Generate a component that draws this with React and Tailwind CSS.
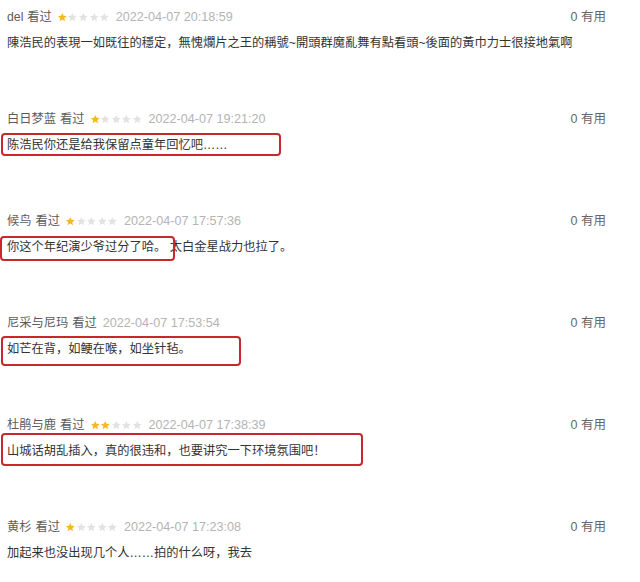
import React from "react";

// Comment list data
const comments = [
  {
    name: "del",
    stars: 1,
    time: "2022-04-07 20:18:59",
    text: "陳浩民的表現一如既往的穩定，無愧爛片之王的稱號~開頭群魔亂舞有點看頭~後面的黃巾力士很接地氣啊",
  },
  {
    name: "白日梦蓝",
    stars: 1,
    time: "2022-04-07 19:21:20",
    text: "陈浩民你还是给我保留点童年回忆吧……",
    box: "-top-[2px] -left-[6px] w-[280px] h-[23px]",
  },
  {
    name: "候鸟",
    stars: 1,
    time: "2022-04-07 17:57:36",
    text: "你这个年纪演少爷过分了哈。 太白金星战力也拉了。",
    box: "-top-[1px] -left-[7px] w-[175px] h-[25px]",
  },
  {
    name: "尼采与尼玛",
    stars: 0,
    time: "2022-04-07 17:53:54",
    text: "如芒在背，如鲠在喉，如坐针毡。",
    box: "-top-[3px] -left-[6px] w-[240px] h-[30px]",
  },
  {
    name: "杜鹃与鹿",
    stars: 2,
    time: "2022-04-07 17:38:39",
    text: "山城话胡乱插入，真的很违和，也要讲究一下环境氛围吧！",
    box: "-top-[8px] -left-[6px] w-[362px] h-[33px]",
  },
  {
    name: "黄杉",
    stars: 1,
    time: "2022-04-07 17:23:08",
    text: "加起来也没出现几个人……拍的什么呀，我去",
  },
];

const Star = ({ on }) => (
  <svg viewBox="0 0 24 24" className="w-[10.6px] h-[10.6px]">
    <path
      d="M12 2l2.9 6.6 7.1.6-5.4 4.7 1.6 7-6.2-3.7-6.2 3.7 1.6-7L2 9.2l7.1-.6z"
      fill={on ? "#f6b822" : "#e2e2e2"}
    />
  </svg>
);

const Stars = ({ count }) => (
  <div className="flex items-center ml-[5px]">
    {[0, 1, 2, 3, 4].map((i) => (
      <Star key={i} on={i < count} />
    ))}
  </div>
);

const App = () => {
  return (
    <div className="w-[640px] h-[582px] bg-white overflow-hidden font-['Liberation_Sans','Noto_Sans_CJK_SC',sans-serif]">
      {comments.map((c, idx) => (
        <div key={idx} className="h-[102px] pl-[7px] pr-[34px] pt-[7px]">
          {/* Header */}
          <div className="flex items-center justify-between h-[20px]">
            <div className="flex items-center">
              <span className="text-[12.25px] text-[#5c5c5c]">{c.name}</span>
              <span className="text-[12.25px] text-[#5c5c5c] ml-[4px]">看过</span>
              {c.stars > 0 && <Stars count={c.stars} />}
              <span className="text-[12.6px] text-[#b4b4b4] ml-[6px]">{c.time}</span>
            </div>
            <span className="text-[12.5px] text-[#666]">0 有用</span>
          </div>

          {/* Body */}
          <div className="relative mt-[6px] h-[20px] leading-[20px] text-[12.25px] text-[#333] whitespace-nowrap">
            {c.text}
            {c.box && (
              <div
                className={`absolute ${c.box} border-[2.5px] border-[#c8282d] rounded-[4px]`}
              />
            )}
          </div>
        </div>
      ))}
    </div>
  );
};

export default App;
